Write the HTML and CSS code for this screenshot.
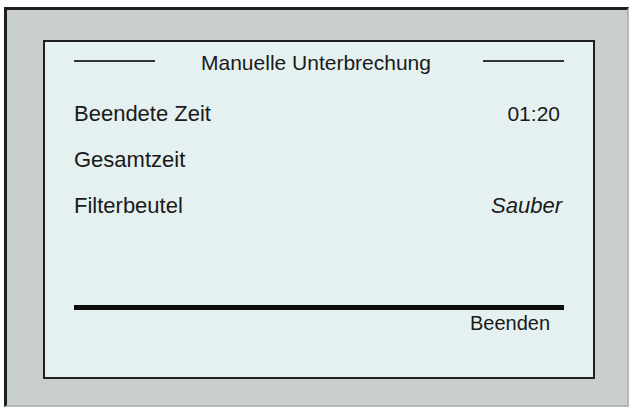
FILE: index.html
```html
<!DOCTYPE html>
<html lang="de">
<head>
<meta charset="utf-8">
<title>Manuelle Unterbrechung</title>
<link rel="stylesheet" href="styles.css">
</head>
<body>
<div class="frame">
  <div class="panel">
    <div class="title-row">
      <span class="rule"></span>
      <span class="title">Manuelle Unterbrechung</span>
      <span class="rule"></span>
    </div>
    <div class="rows">
      <div class="row"><span>Beendete Zeit</span><span class="value">01:20</span></div>
      <div class="row"><span>Gesamtzeit</span><span></span></div>
      <div class="row"><span>Filterbeutel</span><span class="status">Sauber</span></div>
    </div>
    <div class="footer">
      <div class="thick-rule"></div>
      <div class="softkey">Beenden</div>
    </div>
  </div>
</div>
</body>
</html>
```

FILE: styles.css
```css
html, body {
  margin: 0;
  padding: 0;
  background: #ffffff;
}
body {
  width: 631px;
  height: 409px;
  overflow: hidden;
  font-family: "Liberation Sans", Arial, Helvetica, sans-serif;
  color: #1a1a1a;
}
.frame {
  box-sizing: border-box;
  margin: 7px 0 0 4px;
  width: 625px;
  height: 400px;
  background: #c9cfce;
  border-top: 3px solid #1f1f1f;
  border-left: 3px solid #1f1f1f;
  border-right: 2px solid #b4b9b8;
  border-bottom: 2px solid #b4b9b8;
  padding: 30px 0 0 36px;
}
.panel {
  box-sizing: border-box;
  width: 552px;
  height: 339px;
  background: #e5f1f1;
  border: 2px solid #1f1f1f;
  padding: 9px 29px 0 29px;
  display: flex;
  flex-direction: column;
  font-size: 22px;
  line-height: 24px;
}
.title-row {
  display: flex;
  align-items: center;
  justify-content: space-between;
}
.title {
  font-size: 21px;
  margin-right: 6px;
}
.rule {
  width: 81px;
  height: 2px;
  background: #333333;
  margin-bottom: 4px;
}
.rows {
  margin-top: 27px;
  display: flex;
  flex-direction: column;
  gap: 22px;
}
.row {
  display: flex;
  justify-content: space-between;
}
.value {
  font-size: 21px;
  margin-right: 4px;
}
.status {
  font-style: italic;
  margin-right: 2px;
}
.footer {
  margin-top: 87px;
}
.thick-rule {
  height: 5px;
  background: #0c0c0c;
}
.softkey {
  font-size: 20px;
  text-align: right;
  padding-right: 14px;
  margin-top: 1px;
}
```
